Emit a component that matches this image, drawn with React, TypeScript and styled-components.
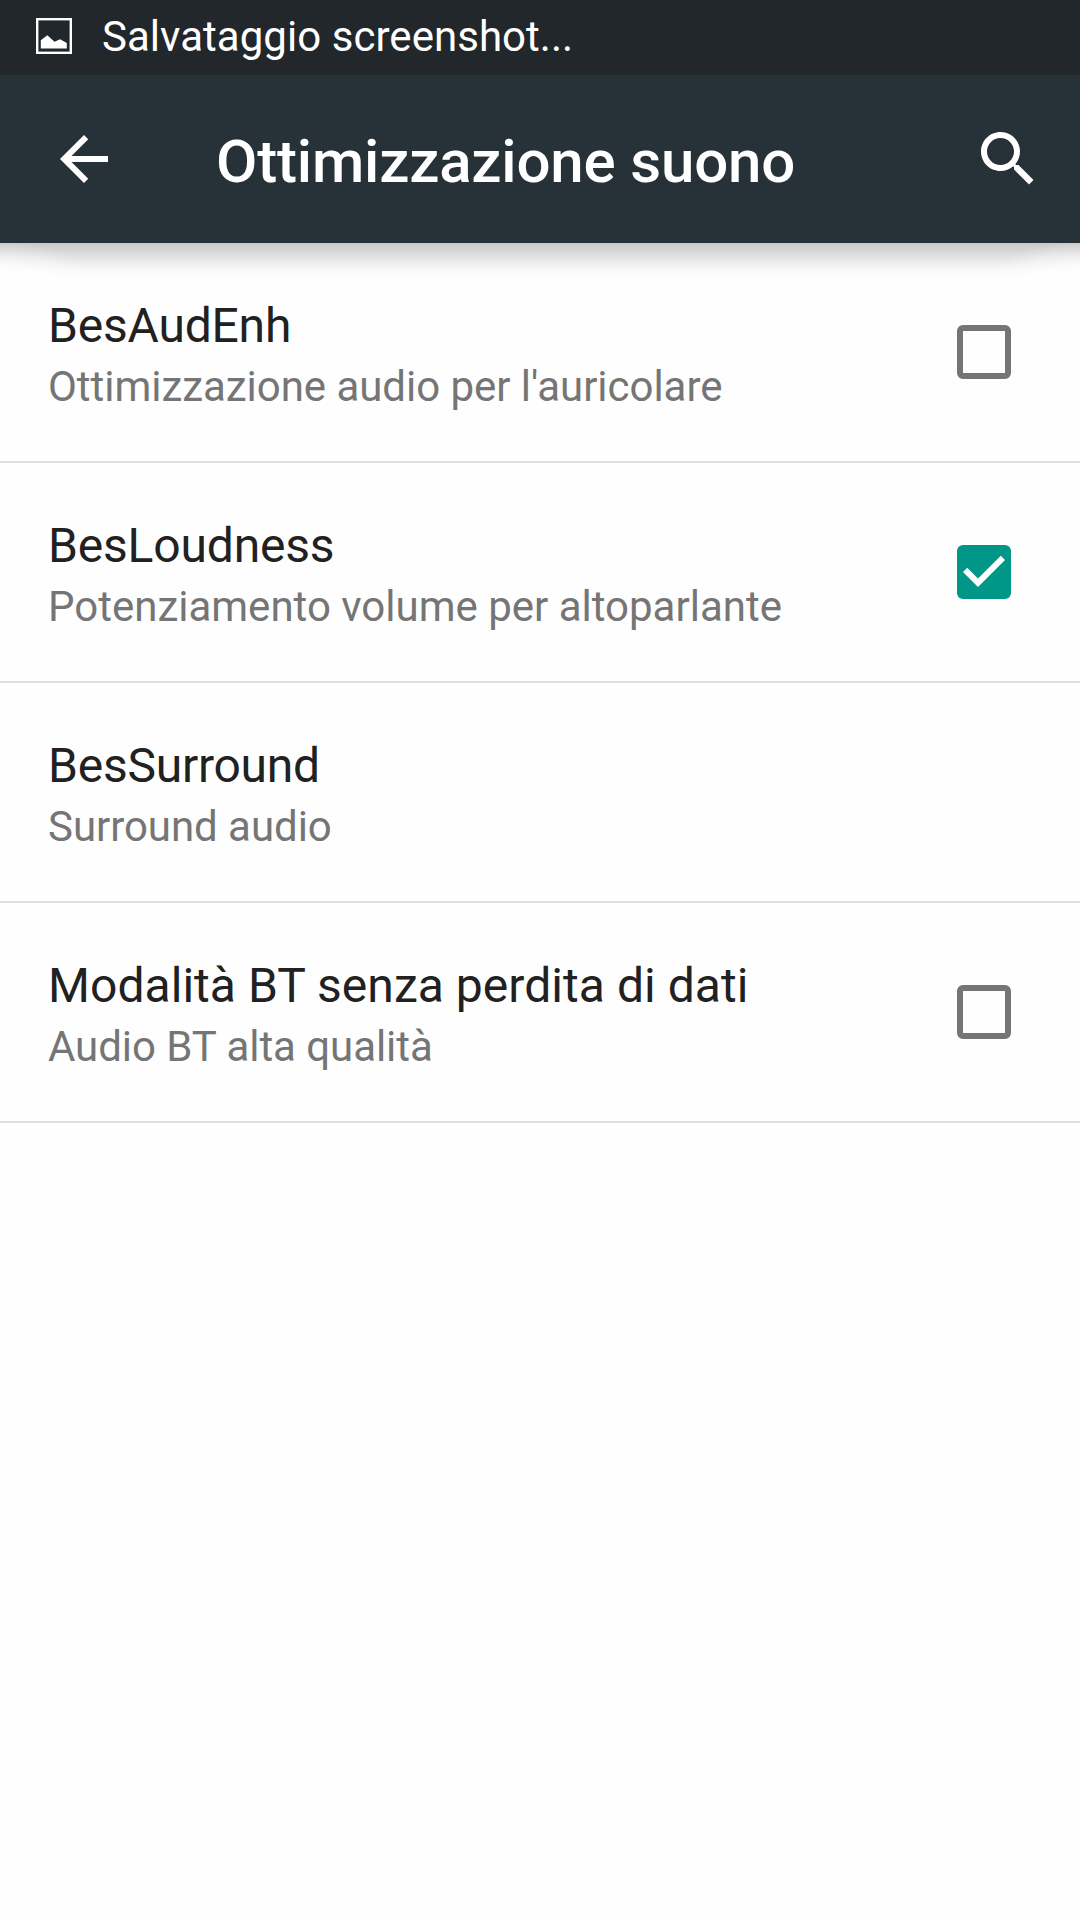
import React from "react";
import styled, { createGlobalStyle } from "styled-components";

const GlobalStyle = createGlobalStyle`
  * { box-sizing: border-box; }
  body { margin: 0; background: #fefefe; font-family: Roboto, "Noto Sans", sans-serif; }
`;

const Screen = styled.div`
  width: 1080px;
  height: 1920px;
  display: flex;
  flex-direction: column;
  overflow: hidden;
  background: #fefefe;
`;

const StatusBar = styled.div`
  height: 75px;
  flex: none;
  display: flex;
  align-items: center;
  gap: 30px;
  padding: 0 36px 3px;
  background: #22272b;
  color: #fff;
`;

const StatusText = styled.span`
  padding-top: 2px;
  font-size: 42px;
  line-height: 50px;
  letter-spacing: 0.04px;
  white-space: nowrap;
`;

const AppBar = styled.header`
  position: relative;
  z-index: 1;
  height: 168px;
  flex: none;
  display: flex;
  align-items: center;
  padding: 0 36px 0 48px;
  background: #263238;
  color: #fff;
`;

const BarShadow = styled.div`
  position: absolute;
  left: 0;
  right: 0;
  top: 100%;
  height: 34px;
  background:
    radial-gradient(ellipse 84px 32px at 0 90%, rgba(254, 254, 254, 0.85) 10%, rgba(254, 254, 254, 0)),
    radial-gradient(ellipse 84px 32px at 100% 90%, rgba(254, 254, 254, 0.85) 10%, rgba(254, 254, 254, 0)),
    linear-gradient(
      rgba(0, 0, 0, 0.21),
      rgba(0, 0, 0, 0.15) 9px,
      rgba(0, 0, 0, 0.08) 18px,
      rgba(0, 0, 0, 0.02) 27px,
      rgba(0, 0, 0, 0)
    );
`;

const Title = styled.h1`
  flex: 1;
  margin: 0;
  padding: 6px 0 0 96px;
  font-size: 60px;
  font-weight: 500;
  line-height: 70px;
  letter-spacing: -0.17px;
`;

const Icon = styled.svg`
  width: 72px;
  height: 72px;
  flex: none;
  fill: currentColor;
`;

const List = styled.main`
  display: flex;
  flex-direction: column;
`;

const Row = styled.div`
  height: 220px;
  display: flex;
  align-items: center;
  justify-content: space-between;
  padding: 0 69px 0 48px;
  border-bottom: 2px solid #e0e0e0;
`;

const Labels = styled.div`
  display: flex;
  flex-direction: column;
  gap: 8px;
  padding-top: 6px;
`;

const Name = styled.div<{ $tracking: number }>`
  font-size: 48px;
  line-height: 56px;
  letter-spacing: ${(p) => p.$tracking}px;
  color: #212121;
`;

const Summary = styled.div<{ $tracking: number }>`
  font-size: 42px;
  line-height: 50px;
  letter-spacing: ${(p) => p.$tracking}px;
  color: #757575;
`;

const Checkbox = styled.div<{ $checked: boolean }>`
  width: 54px;
  height: 54px;
  flex: none;
  display: flex;
  border-radius: 6px;
  border: ${(p) => (p.$checked ? "none" : "6px solid #757575")};
  background: ${(p) => (p.$checked ? "#009688" : "transparent")};
`;

const CheckMark = styled.svg`
  width: 54px;
  height: 54px;
  fill: #fff;
`;

type Item = {
  name: string;
  summary: string;
  nameTracking: number;
  summaryTracking: number;
  checked?: boolean;
};

const items: Item[] = [
  {
    name: "BesAudEnh",
    summary: "Ottimizzazione audio per l'auricolare",
    nameTracking: -0.2,
    summaryTracking: -0.04,
    checked: false,
  },
  {
    name: "BesLoudness",
    summary: "Potenziamento volume per altoparlante",
    nameTracking: -0.18,
    summaryTracking: 0,
    checked: true,
  },
  {
    name: "BesSurround",
    summary: "Surround audio",
    nameTracking: -0.24,
    summaryTracking: -0.05,
  },
  {
    name: "Modalità BT senza perdita di dati",
    summary: "Audio BT alta qualità",
    nameTracking: 0.05,
    summaryTracking: -0.05,
    checked: false,
  },
];

export default function App() {
  return (
    <>
      <GlobalStyle />
      <Screen>
        <StatusBar>
          <svg width="36" height="36" viewBox="0 0 36 36">
            <rect x="1.200" y="1.200" width="33.600" height="33.600" fill="none" stroke="#fff" strokeWidth="2.400" />
            <path d="M4.800 30.400V22.200L11.300 17.300L18.500 23.700L24 21.200L30.800 25V30.400Z" fill="#fff" />
          </svg>
          <StatusText>Salvataggio screenshot...</StatusText>
        </StatusBar>
        <AppBar>
          <Icon viewBox="0 0 24 24">
            <path d="M20 11H7.830l5.590-5.590L12 4l-8 8 8 8 1.410-1.410L7.830 13H20v-2z" />
          </Icon>
          <Title>Ottimizzazione suono</Title>
          <Icon viewBox="0 0 24 24">
            <path d="M15.500 14h-.79l-.28-.27C15.410 12.590 16 11.110 16 9.500 16 5.910 13.090 3 9.500 3S3 5.910 3 9.500 5.910 16 9.500 16c1.610 0 3.090-.59 4.230-1.570l.27.28v.79l5 4.990L20.490 19l-4.990-5zm-6 0C7.010 14 5 11.990 5 9.500S7.010 5 9.500 5 14 7.010 14 9.500 11.990 14 9.500 14z" />
          </Icon>
          <BarShadow />
        </AppBar>
        <List>
          {items.map((item) => (
            <Row key={item.name}>
              <Labels>
                <Name $tracking={item.nameTracking}>{item.name}</Name>
                <Summary $tracking={item.summaryTracking}>{item.summary}</Summary>
              </Labels>
              {item.checked !== undefined && (
                <Checkbox $checked={item.checked}>
                  {item.checked && (
                    <CheckMark viewBox="3 3 18 18">
                      <path d="M10 17l-5-5 1.410-1.410L10 14.170l7.590-7.590L19 8l-9 9z" />
                    </CheckMark>
                  )}
                </Checkbox>
              )}
            </Row>
          ))}
        </List>
      </Screen>
    </>
  );
}
